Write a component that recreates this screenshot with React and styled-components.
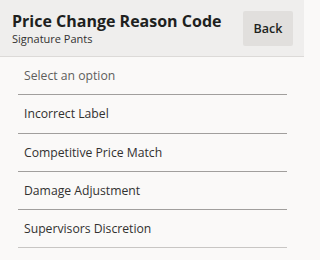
import React from 'react';
import styled, { createGlobalStyle } from 'styled-components';

const GlobalStyle = createGlobalStyle`
  html, body {
    margin: 0;
    padding: 0;
    background: #faf9f8;
  }
  body {
    font-family: "Open Sans", "Noto Sans", sans-serif;
    color: #323130;
  }
`;

const Panel = styled.div`
  width: 304px;
  height: 260px;
  display: flex;
  flex-direction: column;
  background: #faf9f8;
`;

const Header = styled.header`
  height: 57px;
  flex-shrink: 0;
  display: flex;
  align-items: center;
  justify-content: space-between;
  padding: 1px 11px 0 12px;
  background: #efeeed;
  border-bottom: 1px solid #dcdad8;
  box-sizing: border-box;
`;

const Titles = styled.div`
  display: flex;
  flex-direction: column;
  gap: 1px;
`;

const Title = styled.h1`
  margin: 0;
  font-size: 16px;
  font-weight: 700;
  line-height: 20px;
  color: #201f1e;
`;

const Subtitle = styled.div`
  font-size: 11px;
  line-height: 14px;
  color: #323130;
`;

const BackButton = styled.button`
  width: 50px;
  height: 35px;
  margin-top: -1px;
  border: none;
  border-radius: 2px;
  background: #e1dfdd;
  font-family: inherit;
  font-size: 12.5px;
  font-weight: 600;
  color: #201f1e;
  padding: 0;
`;

const List = styled.ul`
  list-style: none;
  margin: 0;
  padding: 0 17px 0 18px;
`;

const Option = styled.li`
  height: 38.3px;
  box-sizing: border-box;
  display: flex;
  align-items: center;
  padding-left: 6px;
  border-bottom: 1px solid ${p => (p.$last ? '#c8c6c4' : '#a19f9d')};
  font-size: 12.2px;
  color: ${p => (p.$placeholder ? '#605e5c' : '#323130')};
`;

const options = [
  'Incorrect Label',
  'Competitive Price Match',
  'Damage Adjustment',
  'Supervisors Discretion',
];

export default function App() {
  return (
    <>
      <GlobalStyle />
      <Panel>
        <Header>
          <Titles>
            <Title>Price Change Reason Code</Title>
            <Subtitle>Signature Pants</Subtitle>
          </Titles>
          <BackButton>Back</BackButton>
        </Header>
        <List>
          <Option $placeholder>Select an option</Option>
          {options.map((o, i) => (
            <Option key={o} $last={i === options.length - 1}>{o}</Option>
          ))}
        </List>
      </Panel>
    </>
  );
}
